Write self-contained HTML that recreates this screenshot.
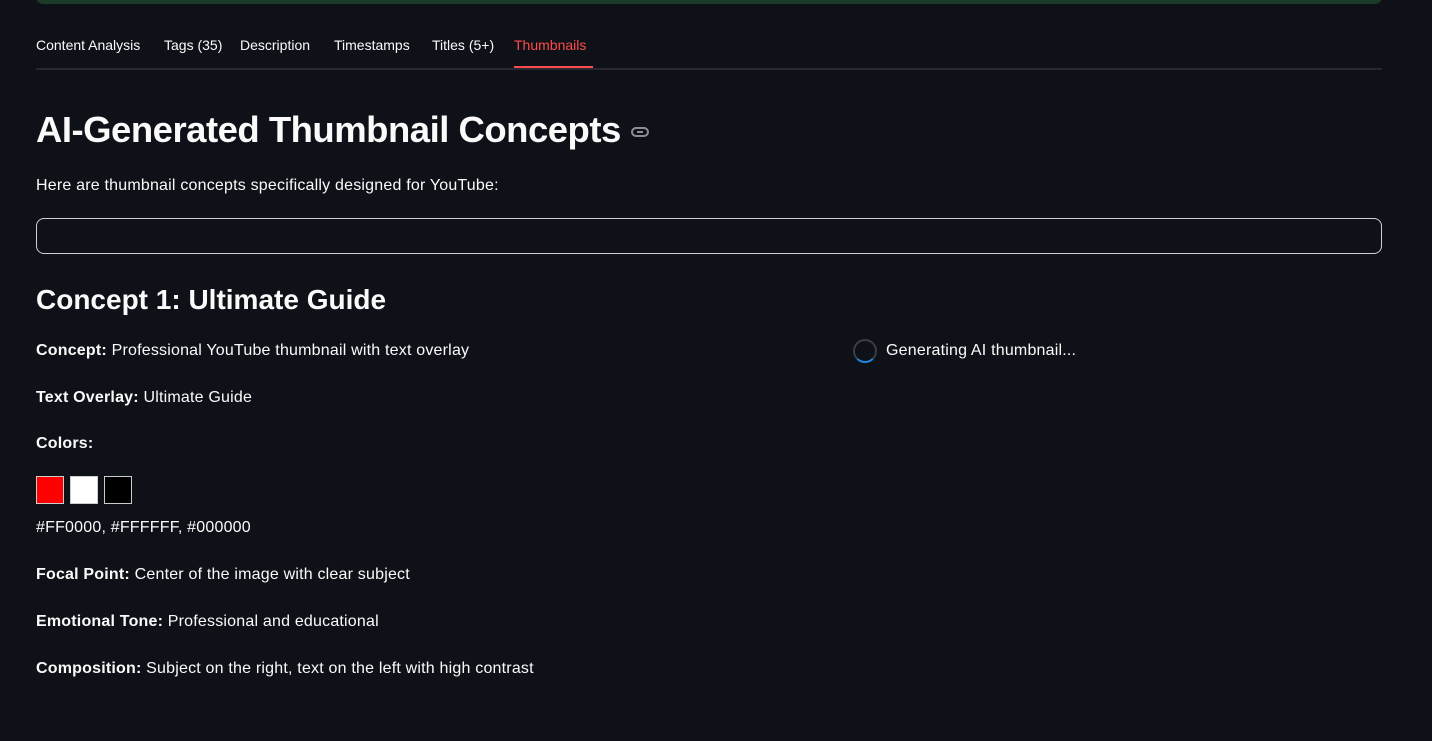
<!DOCTYPE html>
<html><head><meta charset="utf-8"><style>
body{margin:0;background:#0e1117;color:#fafafa;font-family:"Liberation Sans",sans-serif;width:1432px;height:741px;overflow:hidden;position:relative}
.top{position:absolute;left:36px;top:-10px;width:1346px;height:14px;background:#1c3a28;border-radius:8px}
.tabs{position:absolute;left:36px;top:36px;width:1346px;height:32px;border-bottom:2px solid #262730;font-size:14px}
.tabs span{position:absolute;top:1px}
.act{color:#ff4b4b}
.ul{position:absolute;left:514px;top:66px;width:79px;height:2px;background:#ff4b4b}
h1{position:absolute;left:36px;top:109px;margin:0;font-size:36.5px;font-weight:bold;letter-spacing:-0.5px}
.p{position:absolute;left:36px;font-size:16px;margin:0;letter-spacing:0.2px}
.box{position:absolute;left:36px;top:218px;width:1344px;height:34px;border:1px solid #d0d0d0;border-radius:8px}
h2{position:absolute;left:36px;top:284px;margin:0;font-size:28px;font-weight:bold}
.sw{position:absolute;top:476px;width:26px;height:26px;border:1px solid #ccc}
.spin{position:absolute;left:853px;top:339px;width:20px;height:20px;border:2px solid #3a3d45;border-bottom-color:#1e88e5;border-radius:50%}
</style></head><body>
<div class="top"></div>
<div class="tabs">
<span style="left:0">Content Analysis</span><span style="left:128px">Tags (35)</span><span style="left:204px">Description</span><span style="left:298px">Timestamps</span><span style="left:396px">Titles (5+)</span><span style="left:478px" class="act">Thumbnails</span>
</div>
<div class="ul"></div>
<h1>AI-Generated Thumbnail Concepts <svg width="20" height="12" viewBox="0 0 20 12" style="vertical-align:middle"><rect x="2" y="2" width="16" height="8" rx="4" fill="none" stroke="#8a8d93" stroke-width="2"/><line x1="7" y1="6" x2="13" y2="6" stroke="#8a8d93" stroke-width="2"/></svg></h1>
<p class="p" style="top:177px">Here are thumbnail concepts specifically designed for YouTube:</p>
<div class="box"></div>
<h2>Concept 1: Ultimate Guide</h2>
<p class="p" style="top:342px"><b>Concept:</b> Professional YouTube thumbnail with text overlay</p>
<p class="p" style="top:389px"><b>Text Overlay:</b> Ultimate Guide</p>
<p class="p" style="top:435px"><b>Colors:</b></p>
<div class="sw" style="left:36px;background:#f00"></div>
<div class="sw" style="left:70px;background:#fff"></div>
<div class="sw" style="left:104px;background:#000"></div>
<p class="p" style="top:519px">#FF0000, #FFFFFF, #000000</p>
<p class="p" style="top:566px"><b>Focal Point:</b> Center of the image with clear subject</p>
<p class="p" style="top:613px"><b>Emotional Tone:</b> Professional and educational</p>
<p class="p" style="top:660px"><b>Composition:</b> Subject on the right, text on the left with high contrast</p>
<div class="spin"></div>
<p class="p" style="top:342px;left:886px">Generating AI thumbnail...</p>
</body></html>
